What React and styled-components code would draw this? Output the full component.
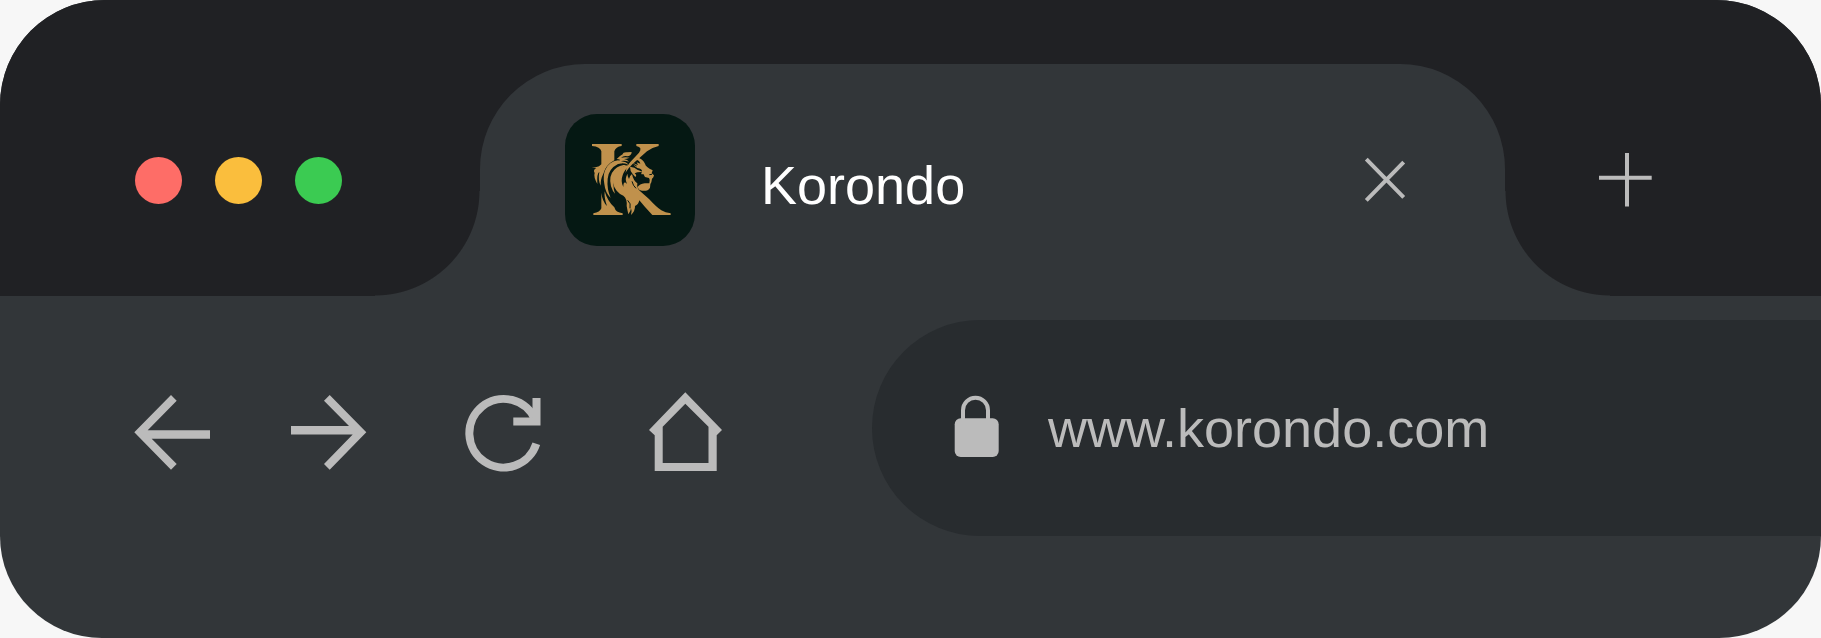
import React from "react";
import styled, { createGlobalStyle } from "styled-components";

const color = {
  page: "#f7f7f7",
  frame: "#202124",
  surface: "#323639",
  field: "#282c2f",
  icon: "#bbbbbb",
  text: "#ffffff",
  brand: "#051813",
  gold: "#c0914c",
};

const GlobalStyle = createGlobalStyle`
  *, *::before, *::after { box-sizing: border-box; }
  body {
    margin: 0;
    background: ${color.page};
    font-family: "Liberation Sans", Arial, Helvetica, sans-serif;
  }
`;

const Window = styled.main`
  display: flex;
  flex-direction: column;
  min-height: 100vh;
  overflow: hidden;
  border-radius: 105px 105px 102px 102px;
  background: ${color.surface};
`;

const TabStrip = styled.header`
  display: flex;
  align-items: center;
  padding: 64px 167px 0 135px;
  background: ${color.frame};
`;

const WindowControls = styled.div`
  display: flex;
  gap: 33px;
  margin-right: 138px;
`;

const Light = styled.button`
  width: 47px;
  height: 47px;
  padding: 0;
  border: 0;
  border-radius: 50%;
  background: ${(p) => p.$color};
`;

const Tab = styled.div`
  position: relative;
  display: flex;
  flex: 1;
  align-items: center;
  height: 232px;
  margin-right: 93px;
  padding: 0 98px 0 85px;
  border-radius: 105px 105px 0 0;
  background: ${color.surface};

  &::before,
  &::after {
    content: "";
    position: absolute;
    bottom: 0;
    width: 105px;
    height: 105px;
  }
  &::before {
    right: 100%;
    background: radial-gradient(circle at 0 0, transparent 104px, ${color.surface} 105px);
  }
  &::after {
    left: 100%;
    background: radial-gradient(circle at 100% 0, transparent 104px, ${color.surface} 105px);
  }
`;

const Favicon = styled.svg`
  flex: none;
  width: 130px;
  height: 132px;
  border-radius: 32px;
  background: ${color.brand};
`;

const TabTitle = styled.h1`
  flex: 1;
  margin: 0 0 0 66px;
  padding-top: 10px;
  color: ${color.text};
  font-size: 54px;
  font-weight: 400;
  line-height: 64px;
`;

const IconButton = styled.button`
  flex: none;
  width: ${(p) => p.$width}px;
  height: ${(p) => p.$height}px;
  padding: 0;
  border: 0;
  background: none;
  color: ${color.icon};

  svg {
    display: block;
    width: 100%;
    height: 100%;
  }
`;

const Toolbar = styled.div`
  display: flex;
  align-items: center;
  padding: 24px 0 24px 132px;
`;

const Navigation = styled.nav`
  display: flex;
  gap: 92px;
  padding-top: 8px;
`;

const History = styled.div`
  display: flex;
  gap: 72px;
`;

const AddressBar = styled.label`
  display: flex;
  flex: 1;
  align-items: center;
  gap: 49px;
  min-width: 0;
  height: 216px;
  margin-left: 148px;
  padding-left: 82px;
  border-radius: 108px 0 0 108px;
  background: ${color.field};
`;

const Lock = styled.svg`
  flex: none;
  width: 45px;
  height: 66px;
  color: ${color.icon};
`;

const AddressInput = styled.input`
  flex: 1;
  min-width: 0;
  height: 64px;
  padding: 0;
  border: 0;
  outline: 0;
  background: none;
  color: ${color.icon};
  font-family: inherit;
  font-size: 54px;
  line-height: 64px;
`;

function LionLogo() {
  return (
    <Favicon viewBox="15 27 390 396" preserveAspectRatio="none" role="img" aria-label="Korondo logo">
      <g fill={color.gold}>
        {/* serif stem */}
        <path d="M96 117H185V123Q167 125 163 139V166Q137 180 130 206Q120 225 123 242Q113 229 118 200Q110 205 112 237Q100 215 104 204Q98 195 109 189H95Q108 188 117 184L124 178V139Q121 125 96 123Z" />
        <path d="M100 330V325Q120 322 124 310V263Q127 289 141 303Q132 279 134 259Q143 290 163 307Q167 323 188 325V330Z" />
        {/* arm of the letter, running into the brow */}
        <path d="M229 117H296V123Q277 127 261 139L217 178L206 190Q199 198 197 204Q198 185 211 171L237 143Q249 127 229 123Z" />
        {/* crown tufts */}
        <path d="M170 162Q181 151 188 148Q189 141 201 142L215 141Q215 151 203 154Q192 150 183 158Q198 155 209 158Q199 162 192 162Q203 164 207 170Q193 165 184 168Q174 169 187 175Q174 173 165 179Q171 169 181 165Q175 162 170 162Z" />
        {/* outer mane */}
        <path d="M174 166Q147 170 136 194Q128 212 133 237Q136 264 152 279Q140 251 143 221Q146 191 174 177Q188 172 205 179Q178 178 163 194Q145 212 153 244Q158 260 165 266Q155 237 166 211Q177 188 205 178L197 172Q184 169 174 166Z" />
        {/* inner mane, beard and leg of the letter */}
        <path d="M203 181Q177 184 163 207Q152 235 170 257Q178 267 190 272Q202 281 200 303Q202 315 205 328Q212 320 213 310Q217 318 213 330Q226 317 225 303Q236 298 238 286Q254 306 277 330H332V325Q316 323 304 316Q290 307 267 282L239 257Q230 250 232 235Q220 227 216 207Q209 212 207 222Q201 214 203 206Q193 220 201 237Q190 225 190 246Q181 229 188 211Q194 192 207 185Z" />
        {/* face */}
        <path d="M233 157Q248 163 255 176Q257 186 278 196L275 205L282 211Q281 218 276 221L274 232Q269 237 270 248Q263 260 246 257Q236 256 232 247Q239 237 254 235L268 235Q272 226 267 219L255 216L250 207Q240 210 246 200Q247 191 232 189Q222 184 219 174Q225 177 234 180L230 172L241 176Q238 166 226 163Z" />
        <path d="M210 185Q225 187 232 194L249 201Q232 200 224 205Q232 211 226 216Q217 207 212 198Z" />
      </g>
      <g fill="none" stroke={color.brand} strokeWidth="3">
        <path d="M203 286Q214 295 210 310M228 250Q219 242 216 229" />
        <path d="M220 177L230 183M268 209L276 208" />
      </g>
    </Favicon>
  );
}

export default function App() {
  return (
    <>
      <GlobalStyle />
      <Window>
        <TabStrip>
          <WindowControls>
            <Light $color="#fe6d67" aria-label="Close window" />
            <Light $color="#fabe3d" aria-label="Minimize window" />
            <Light $color="#3bcb52" aria-label="Maximize window" />
          </WindowControls>
          <Tab>
            <LionLogo />
            <TabTitle>Korondo</TabTitle>
            <IconButton $width={44} $height={48} aria-label="Close tab">
              <svg viewBox="0 0 44 48" fill="none" stroke="currentColor" strokeWidth="4">
                <path d="M3.3 3.2L40.7 41.3M40.7 6.2L3.3 44.3" />
              </svg>
            </IconButton>
          </Tab>
          <IconButton $width={56} $height={56} aria-label="New tab">
            <svg viewBox="0 0 56 56" fill="none" stroke="currentColor" strokeWidth="4">
              <path d="M1 25.8H53.7M29 1V54.5" />
            </svg>
          </IconButton>
        </TabStrip>
        <Toolbar>
          <Navigation aria-label="Browser navigation">
            <History>
              <IconButton $width={84} $height={80} aria-label="Back">
                <svg viewBox="0 0 84 80" fill="currentColor">
                  <path d="M2.3 40.3L39 3L44.7 8.7L15.7 38.3H78V46.8H19.7L44.7 72L39 77.7Z" />
                </svg>
              </IconButton>
              <IconButton $width={84} $height={80} aria-label="Forward">
                <svg viewBox="0 0 84 80" fill="currentColor">
                  <path d="M78.3 40.3L41.7 3L36 8.7L61 34H3V42.5H64.7L36 72L41.7 77.7Z" />
                </svg>
              </IconButton>
            </History>
            <IconButton $width={84} $height={80} aria-label="Reload">
              <svg viewBox="0 0 84 80" fill="none" stroke="currentColor" strokeWidth="8">
                <path d="M71.3 28A34.3 34.3 0 1 0 72.3 51.7" />
                <path d="M72.5 6V29.4H49.3" />
              </svg>
            </IconButton>
            <IconButton $width={84} $height={80} aria-label="Home">
              <svg viewBox="0 0 84 80" fill="currentColor" fillRule="evenodd">
                <path d="M45.3 .3L82 38L76.7 43.3V79H14.7V43.3L9 38ZM45.3 11.7L22.7 34.7V71H68.5V34.7Z" />
              </svg>
            </IconButton>
          </Navigation>
          <AddressBar>
            <Lock viewBox="0 0 45 66" aria-hidden="true">
              <path d="M9 25V15.2A12.5 12.5 0 0 1 34 15.2V25" fill="none" stroke="currentColor" strokeWidth="4" />
              <rect x="0.7" y="23.3" width="44" height="38.7" rx="6" fill="currentColor" />
            </Lock>
            <AddressInput type="text" aria-label="Address" defaultValue="www.korondo.com" spellCheck={false} />
          </AddressBar>
        </Toolbar>
      </Window>
    </>
  );
}
